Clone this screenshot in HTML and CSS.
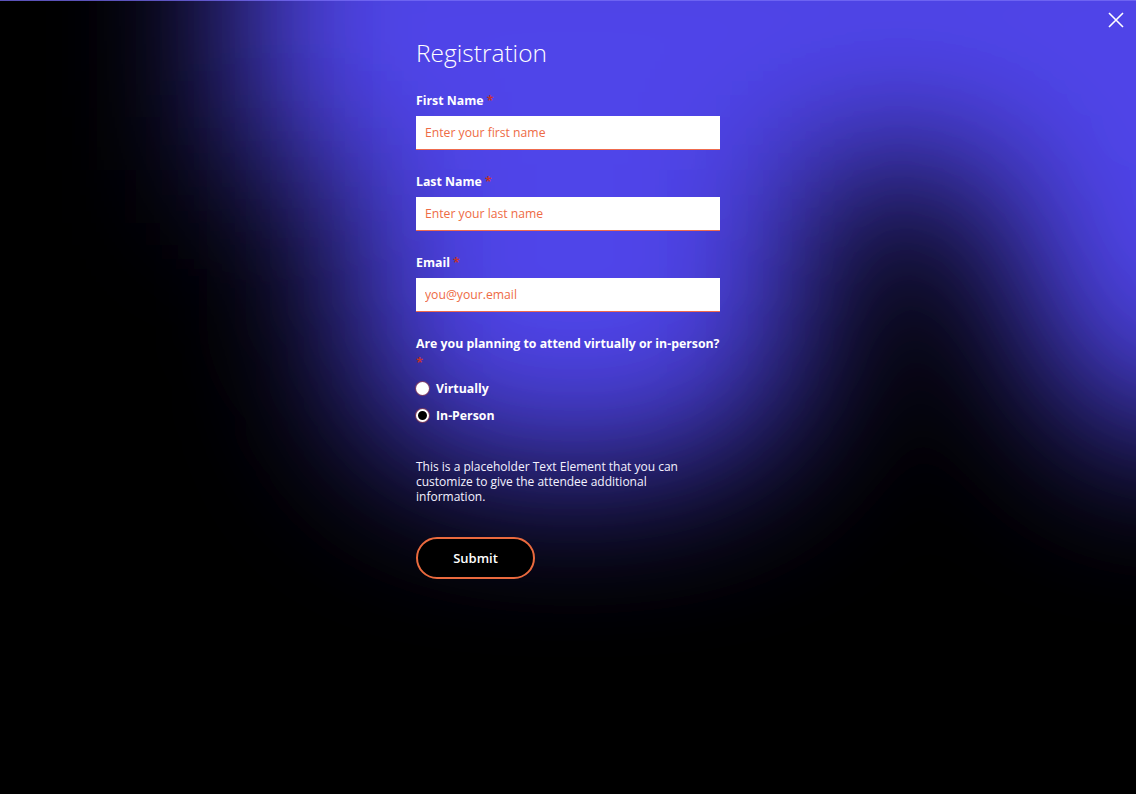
FILE: index.html
```html
<!DOCTYPE html>
<html lang="en">
<head>
<meta charset="utf-8">
<title>Registration</title>
<link rel="stylesheet" href="styles.css">
</head>
<body>
<div class="stage">
  <svg class="glow" viewBox="0 0 1136 794" preserveAspectRatio="none" aria-hidden="true">
    <defs>
      <filter id="soft" x="-50%" y="-50%" width="200%" height="200%">
        <feGaussianBlur stdDeviation="80"/>
      </filter>
    </defs>
    <rect width="1136" height="794" fill="#000"/>
    <g filter="url(#soft)" fill="#4f45e9">
      <rect x="235" y="-160" width="1060" height="330"/>
      <rect x="345" y="-60" width="460" height="530" rx="150"/>
      <ellipse cx="1170" cy="130" rx="180" ry="320"/>
    </g>
  </svg>

  <button class="close" type="button" aria-label="Close">
    <svg width="16" height="16" viewBox="0 0 16 16"><path d="M1 1 L15 15 M15 1 L1 15" stroke="#fff" stroke-width="1.6" fill="none"/></svg>
  </button>

  <form class="form">
    <h1 class="title">Registration</h1>

    <div class="field">
      <label class="label">First Name <span class="req">*</span></label>
      <input class="input" type="text" placeholder="Enter your first name">
    </div>

    <div class="field">
      <label class="label">Last Name <span class="req">*</span></label>
      <input class="input" type="text" placeholder="Enter your last name">
    </div>

    <div class="field">
      <label class="label">Email <span class="req">*</span></label>
      <input class="input" type="email" placeholder="you@your.email">
    </div>

    <div class="question">
      <div class="label">Are you planning to attend virtually or in-person?</div>
      <div class="req req-line">*</div>
      <div class="options">
        <label class="option"><span class="radio"></span>Virtually</label>
        <label class="option"><span class="radio radio-focus"></span>In-Person</label>
      </div>
    </div>

    <p class="note">This is a placeholder Text Element that you can customize to give the attendee additional information.</p>

    <button class="submit" type="button">Submit</button>
  </form>
</div>
</body>
</html>
```

FILE: styles.css
```css
* { box-sizing: border-box; }

html, body {
  margin: 0;
  height: 100%;
}

body {
  font-family: "Open Sans", "Liberation Sans", sans-serif;
  color: #fff;
  background-color: #000;
}

.stage {
  position: relative;
  min-height: 794px;
  overflow: hidden;
  background-color: #000;
  display: flex;
  justify-content: center;
}

/* thin violet hairline along the top edge */
.stage::before {
  content: "";
  position: absolute;
  left: 0;
  right: 0;
  top: 0;
  height: 1px;
  background: rgba(120, 110, 245, 0.75);
  z-index: 1;
}

/* blurred violet light behind the form */
.glow {
  position: absolute;
  left: 0;
  top: 0;
  width: 100%;
  height: 794px;
  display: block;
}

.close {
  position: absolute;
  top: 12px;
  right: 12px;
  width: 16px;
  height: 16px;
  padding: 0;
  border: 0;
  background: none;
  cursor: pointer;
  z-index: 2;
}
.close svg { display: block; }

.form {
  position: relative;
  width: 304px;
  padding-top: 33px;
  display: flex;
  flex-direction: column;
}

.title {
  margin: 0 0 19px;
  font-size: 24.5px;
  line-height: 40px;
  font-weight: 300;
  color: #fff;
}

.field {
  display: flex;
  flex-direction: column;
  gap: 6px;
  margin-bottom: 23px;
}

.label {
  font-size: 12.3px;
  line-height: 18px;
  font-weight: 700;
  color: #fff;
  white-space: nowrap;
}

.req {
  color: #c2322c;
  font-weight: 700;
}

.req-line {
  font-size: 13px;
  line-height: 18px;
}

.input {
  display: block;
  width: 100%;
  height: 34px;
  margin: 0;
  padding: 0 9px;
  border: 0;
  border-bottom: 1px solid #ee6b4e;
  border-radius: 0;
  background: #fff;
  font-family: inherit;
  font-size: 12.2px;
  color: #222;
  outline: none;
}
.input::placeholder {
  color: #ee6b45;
  opacity: 1;
}

.question {
  display: flex;
  flex-direction: column;
}

.options {
  margin-top: 7px;
  display: flex;
  flex-direction: column;
  gap: 7px;
}

.option {
  display: flex;
  align-items: center;
  gap: 7px;
  height: 20px;
  font-size: 12.3px;
  font-weight: 700;
  color: #fff;
}

.radio {
  width: 13px;
  height: 13px;
  border-radius: 50%;
  background: #fff;
  box-shadow: 0 0 0 1px rgba(190, 80, 70, 0.55);
  flex: none;
}
.radio-focus {
  background: #000;
  border: 2px solid #fff;
}

.note {
  margin: 34px 0 0;
  font-size: 12px;
  line-height: 15px;
  color: #f4f2ff;
  width: 290px;
}

.submit {
  margin-top: 33px;
  width: 119px;
  height: 42px;
  border: 2px solid #ea6a3e;
  border-radius: 21px;
  background: #000;
  color: #fff;
  font-family: inherit;
  font-size: 13px;
  font-weight: 600;
  cursor: pointer;
}
```
